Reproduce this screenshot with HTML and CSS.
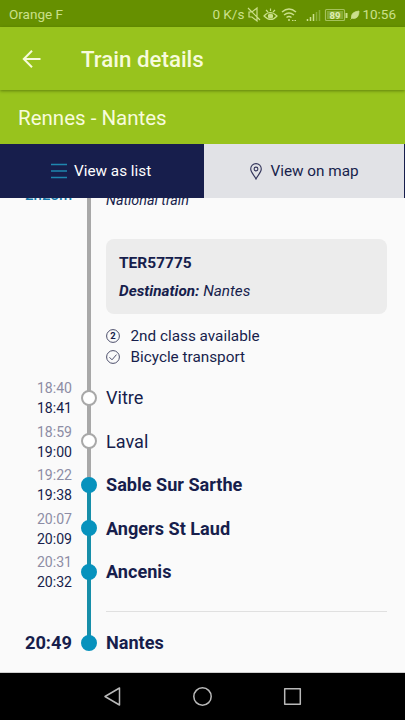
FILE: index.html
```
<!DOCTYPE html>
<html lang="en">
<head>
<meta charset="utf-8">
<title>Train details</title>
<link rel="stylesheet" href="styles.css">
</head>
<body>
<div class="status">
  <span class="carrier">Orange F</span>
  <span class="speed">0 K/s</span>
  <svg class="status-icons" width="114" height="20" viewBox="0 0 114 20" fill="none" stroke="#cbe08b" stroke-width="1.2">
    <path d="M2 8h3l5-4v13l-5-4H2zM1 4l12 12"/>
    <path d="M17 12q6-7 13 0q-6 7-13 0zM19 6l2 2M23.500 4.500v2.500M28 6l-2 2"/><circle cx="23.500" cy="12" r="2" fill="#cbe08b"/>
    <path d="M35 8q7-6 14 0M37 11q5-4 10 0M39.500 13.500q2.500-2 5 0" stroke-width="1.500"/><circle cx="42" cy="16" r="1" fill="#cbe08b" stroke="none"/><path d="M45 16.500h1.500M47.500 16.500H49"/>
    <path d="M60.500 17v-2M63.500 17v-4M66.500 17V10" stroke-width="1.500"/><path d="M69.500 17V8M72.500 17V6" stroke="#8bb03b" stroke-width="1.500"/>
    <rect x="78.500" y="5.500" width="19" height="11" rx="1" stroke="#a5c25c"/><rect x="80" y="7" width="16" height="8" fill="#86ac35" stroke="none"/><path d="M99.500 9v5" stroke-width="2"/>
    <text class="battery" x="88" y="14.500" text-anchor="middle">89</text>
    <path d="M104.500 14q-1-6 7.500-7q0 7.500-5.500 7.500zM103.500 15.500l5-5" fill="#cbe08b" stroke-width=".8"/>
  </svg>
  <span class="clock">10:56</span>
</div>
<header class="appbar">
  <svg width="20" height="20" viewBox="0 0 20 20" fill="none" stroke="#f7fbdc" stroke-width="2"><path d="M18.500 10H2M10 1.800L1.800 10L10 18.200"/></svg>
  <h1>Train details</h1>
</header>
<div class="route">Rennes - Nantes</div>
<nav class="tabs">
  <div class="tab active"><svg width="16" height="16" viewBox="0 0 16 16" stroke="#1f86ae" stroke-width="1.400"><path d="M0 1.500h16M0 8h16M0 14.500h16"/></svg><span>View as list</span></div>
  <div class="tab map"><svg width="12" height="17" viewBox="0 0 12 17" fill="none" stroke="#33355b" stroke-width="1.100"><path d="M6 16C4.500 12.500.7 9.500.7 5.900a5.300 5.300 0 0 1 10.600 0C11.300 9.500 7.500 12.500 6 16z"/><circle cx="6" cy="6" r="1.900"/></svg><span>View on map</span></div>
</nav>
<main class="journey">
  <section class="leg">
    <div class="duration">2h23m</div>
    <div class="rail"></div>
    <div class="info">
      <div class="category">National train</div>
      <div class="card"><strong>TER57775</strong><p><b>Destination:</b> Nantes</p></div>
      <div class="feature"><svg width="14" height="14" viewBox="0 0 14 14" fill="none" stroke="#4c4e6b"><circle cx="7" cy="7" r="6.400"/><text class="class-no" x="7" y="10.300" text-anchor="middle">2</text></svg>2nd class available</div>
      <div class="feature"><svg width="14" height="14" viewBox="0 0 14 14" fill="none" stroke="#4c4e6b"><circle cx="7" cy="7" r="6.400"/><path d="M3.500 7.300L6 9.800L10.500 4.600"/></svg>Bicycle transport</div>
    </div>
  </section>
  <section class="stop"><div class="times"><i>18:40</i><span>18:41</span></div><div class="rail"><b class="dot"></b></div><div class="name">Vitre</div></section>
  <section class="stop"><div class="times"><i>18:59</i><span>19:00</span></div><div class="rail"><b class="dot"></b></div><div class="name">Laval</div></section>
  <section class="stop major first"><div class="times"><i>19:22</i><span>19:38</span></div><div class="rail"><b class="dot"></b></div><div class="name">Sable Sur Sarthe</div></section>
  <section class="stop major"><div class="times"><i>20:07</i><span>20:09</span></div><div class="rail"><b class="dot"></b></div><div class="name">Angers St Laud</div></section>
  <section class="stop major"><div class="times"><i>20:31</i><span>20:32</span></div><div class="rail"><b class="dot"></b></div><div class="name">Ancenis</div></section>
  <section class="gap"><div></div><div class="rail"></div><div class="divider"></div></section>
  <section class="stop major last"><div class="arrival">20:49</div><div class="rail"><b class="dot"></b></div><div class="name">Nantes</div></section>
</main>
<footer class="navbar">
  <svg width="405" height="47" viewBox="0 0 405 47" fill="none" stroke="#b9b9b9" stroke-width="1.500" stroke-linejoin="round"><path d="M119.500 15v17L105 23.500z"/><circle cx="202.500" cy="23.500" r="8.700"/><rect x="284.700" y="15.700" width="15.600" height="15.600"/></svg>
</footer>
</body>
</html>
```
FILE: styles.css
```
* { box-sizing: border-box; }
body { margin: 0; width: 405px; height: 720px; overflow: hidden; display: flex; flex-direction: column; background: #fafafa; color: #171e4c; font-family: Roboto, "Liberation Sans", sans-serif; }
svg { display: block; flex: none; }
.status { height: 27px; flex: none; display: flex; align-items: center; padding: 1px 9px 0 9px; background: #669000; color: #cbe08b; font-size: 13.5px; }
.carrier { flex: 1; font-size: 13.5px; }
.status-icons { margin: 0 1px 0 3px; }
.battery { font-size: 9.5px; font-weight: 700; fill: #e0efb4; stroke: none; }
.appbar { height: 63px; flex: none; display: flex; align-items: center; padding: 1px 22px 0; background: #98c31d; color: #f7fbdc; box-shadow: 0 1px 3px rgba(60, 85, 0, .6); position: relative; }
.appbar h1 { margin: 0 0 0 39px; font-size: 22.3px; font-weight: 500; }
.route { height: 54px; flex: none; padding-left: 18px; background: #98c31d; color: #f7fbdc; font-size: 20.5px; line-height: 57px; }
.tabs { height: 54px; flex: none; display: flex; background: #171e4c; font-size: 15.3px; }
.tab { display: flex; align-items: center; }
.active { width: 203px; padding-left: 51px; gap: 7px; color: #fff; }
.map { width: 200.5px; margin-left: .5px; padding-left: 46px; gap: 9px; background: #e1e2e6; }
.journey { height: 475px; flex: none; overflow: hidden; border-bottom: 1px solid #cfcfcf; }
.leg, .stop, .gap { display: grid; grid-template-columns: 72px 33px 282px; }
.leg { height: 178px; }
.leg .rail, .stop .rail, .gap .rail { width: 4px; margin-left: 15px; background: #a8a8a8; }
.duration { margin-top: -12px; text-align: right; color: #1678a8; font-size: 15px; font-weight: 500; line-height: 18px; }
.info { padding-left: 1px; }
.category { height: 48px; margin-top: -7px; font-size: 14.3px; font-style: italic; line-height: 18px; }
.card { height: 75px; width: 281px; margin-bottom: 11px; padding: 15px 13px; border-radius: 8px; background: #ececec; line-height: 19px; }
.card strong { display: block; font-size: 15.5px; font-weight: 700; }
.card p { margin: 9px 0 0; font-size: 15.3px; font-style: italic; }
.feature { height: 21px; display: flex; align-items: center; gap: 10.5px; font-size: 15.3px; }
.class-no { font-size: 9.5px; font-weight: 700; fill: #171e4c; stroke: none; }
.stop { height: 43.5px; align-items: center; }
.stop .rail { height: 100%; display: flex; align-items: center; justify-content: center; }
.dot { flex: none; width: 16px; height: 16px; border: 2px solid #a8a8a8; border-radius: 50%; background: #fff; }
.times { display: flex; flex-direction: column; padding-top: .8px; text-align: right; font-size: 14.1px; line-height: 20px; }
.times i { font-style: normal; color: #8d8da5; }
.name { padding: 0 0 0 1px; font-size: 18.1px; }
.major .name { font-weight: 700; }
.major .dot { border-color: #0792bd; background: #0792bd; }
.stop.major .rail, .gap .rail { background: #168ea9; }
.stop.first .rail { background: linear-gradient(#a8a8a8 50%, #168ea9 50%); }
.gap { height: 34px; }
.divider { width: 281px; height: 1px; margin: 17px 0 0 1px; background: #e0e0e0; }
.stop.last .rail { background: linear-gradient(#168ea9 50%, transparent 50%); }
.stop.last { height: 30px; }
.arrival { text-align: right; font-size: 18.3px; font-weight: 700; }
.navbar { height: 47px; flex: none; background: #000; }
```
